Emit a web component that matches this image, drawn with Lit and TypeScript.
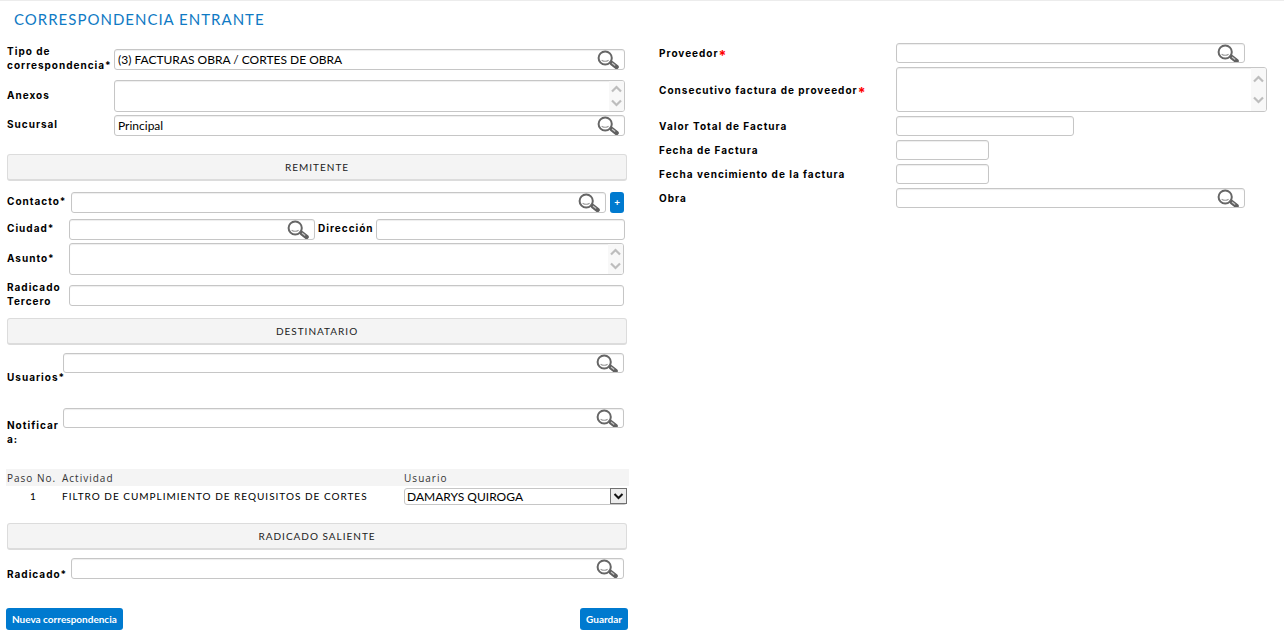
import { LitElement, html, css, nothing } from "lit";
import { customElement } from "lit/decorators.js";

const magnifier = html`<svg class="lens" viewBox="0 0 22 19" aria-hidden="true">
  <circle cx="8.2" cy="8" r="6.6" fill="#fff" stroke="#666" stroke-width="2" />
  <path d="M4.6 10.2Q8.2 12.4 11.6 10.2" fill="none" stroke="#999" stroke-width="1.1" />
  <path d="M12.6 11.6L15 13.4" stroke="#777" stroke-width="2" />
  <path d="M14.8 13.2L19.6 17" stroke="#606060" stroke-width="4.4" stroke-linecap="round" />
  <path d="M15 13L18.2 15.5" stroke="#c4c4c4" stroke-width="1.2" />
</svg>`;

const chevron = (d: string) => html`<svg width="11" height="8" viewBox="0 0 11 8" aria-hidden="true">
  <path d=${d} fill="none" stroke="#bdbdbd" stroke-width="2.2" />
</svg>`;

const label = (id: string, text: string, required = false) =>
  html`<label for=${id}>${text}${required ? html`<span class="req">*</span>` : nothing}</label>`;

const plain = (id: string, size = "") => html`<div class="box ${size}"><input id=${id} type="text" /></div>`;

const lookup = (id: string, value = "", size = "") => html`<div class="box ${size}">
  <input id=${id} type="text" .value=${value} />
  <button class="find" type="button" aria-label="Buscar">${magnifier}</button>
</div>`;

const memo = (id: string, size = "") => html`<div class="box memo ${size}">
  <textarea id=${id}></textarea>
  <div class="scroll">${chevron("M1 6.5L5.5 2L10 6.5")}${chevron("M1 1.5L5.5 6L10 1.5")}</div>
</div>`;

@customElement("app-root")
export class AppRoot extends LitElement {
  static styles = css`
    :host {
      display: block;
      font-family: "Century Gothic", Lato, sans-serif;
      font-size: 10px;
      color: #000;
      background: #fff;
    }
    *, *::before, *::after { box-sizing: border-box; }
    .page { border-top: 1px solid #ececec; padding: 8px 17px 7px 7px; }
    h1 {
      margin: 0 7px 14px;
      font-size: 15px;
      line-height: 20px;
      font-weight: 400;
      letter-spacing: 1px;
      color: #0f7ac4;
    }
    .columns {
      display: grid;
      grid-template-columns: minmax(0, 51fr) minmax(0, 50fr);
      column-gap: 32px;
      align-items: start;
    }
    .main { padding-top: 1px; }
    .row {
      display: grid;
      grid-template-columns: 62px minmax(0, 1fr);
      align-items: center;
      padding-right: 3px;
    }
    .row.wide { grid-template-columns: 107px minmax(0, 1fr); padding-right: 2px; }
    .row.contact { grid-template-columns: 64px minmax(0, 1fr) 14px; }
    .row.contact .box { margin-right: 4px; }
    .row.city { grid-template-columns: 62px minmax(0, 246fr) 61px minmax(0, 249fr); padding-right: 2px; }
    .row.city .second { padding-left: 3px; }
    .row.people { grid-template-columns: 56px minmax(0, 1fr); min-height: 48px; }
    .row.people .box { align-self: start; height: 20px; }
    .row.filed { grid-template-columns: 64px minmax(0, 1fr); min-height: 32px; }
    .row.filed .box { align-self: start; }
    label {
      font-family: "Century Gothic", Inter, sans-serif;
      font-weight: 700;
      line-height: 14px;
      letter-spacing: 1px;
      padding-bottom: 3px;
    }
    .people label, .filed label, .side label { padding-bottom: 0; }
    .req { color: #f00; font-size: 14px; line-height: 0; vertical-align: -4px; letter-spacing: 0; }
    .box {
      display: flex;
      height: 21px;
      border: 1px solid #c6c6c6;
      border-radius: 3px;
      background: #fff;
      box-shadow: inset 0 1px 1px #eee;
      overflow: hidden;
    }
    input, textarea {
      flex: 1;
      min-width: 0;
      width: 100%;
      border: 0;
      outline: 0;
      padding: 0 3px;
      background: transparent;
      font: 12px "Century Gothic", Lato, sans-serif;
      color: #000;
    }
    textarea { resize: none; overflow: hidden; }
    .memo { height: 32px; }
    .scroll {
      display: flex;
      flex-direction: column;
      justify-content: space-between;
      align-items: center;
      width: 15px;
      padding: 4px 0;
      background: #f8f8f8;
    }
    .tall .scroll { padding: 7px 0; }
    .find {
      display: flex;
      border: 0;
      margin: 0 5px 0 0;
      padding: 0;
      background: none;
    }
    .lens { width: 22px; height: 19px; }
    h2 {
      margin: 0;
      height: 27px;
      border: 1px solid #dcdcdc;
      border-bottom-width: 2px;
      border-radius: 3px;
      background: #f4f4f4;
      font-size: 10px;
      line-height: 25px;
      font-weight: 400;
      letter-spacing: 1px;
      text-align: center;
      color: #222;
    }
    .blue {
      border: 0;
      border-radius: 3px;
      background: #007acf;
      color: #fff;
      font: 700 10px "Century Gothic", Lato, sans-serif;
      height: 22px;
      padding: 0 6px;
    }
    .plus { height: 21px; padding: 0 0 2px; }
    table {
      width: calc(100% + 3px);
      margin: 13px -2px 0 -1px;
      border-collapse: collapse;
      table-layout: fixed;
      letter-spacing: 1px;
    }
    th {
      height: 17px;
      padding: 0 1px;
      background: #f4f4f4;
      font: 500 10px/16px "Open Sans", sans-serif;
      text-align: left;
      white-space: nowrap;
      color: #333;
    }
    td { height: 19px; padding: 0 1px; white-space: nowrap; }
    .step { width: 55px; }
    .who { width: 226px; }
    td.step { text-align: center; }
    .pick { position: relative; width: 223px; height: 17px; margin-top: 1px; }
    select {
      appearance: none;
      display: block;
      width: 100%;
      height: 17px;
      border: 1px solid #c6c6c6;
      border-radius: 3px;
      padding: 0 18px 0 2px;
      background: #fff;
      font: 12px/15px "Century Gothic", Lato, sans-serif;
      color: #000;
    }
    .arrow {
      position: absolute;
      top: 0;
      right: 0;
      width: 17px;
      height: 16px;
      border: 1px solid #707070;
      background: #ececec;
      pointer-events: none;
    }
    .arrow svg { display: block; width: 15px; height: 14px; }
    .actions { display: flex; justify-content: space-between; margin: 18px -1px 0; }
    .side { display: grid; grid-template-columns: 237px minmax(0, 1fr); row-gap: 4px; align-items: center; }
    .side .box { height: 20px; }
    .side .memo.tall { height: 45px; }
    .mid { width: 94%; }
    .amount { width: 48%; }
    .date { width: 25%; }
    .g3 { margin-top: 3px; }
    .g5 { margin-top: 5px; }
    .g6 { margin-top: 6px; }
    .g7 { margin-top: 7px; }
    .g8 { margin-top: 8px; }
    .g11 { margin-top: 11px; }
    .g18 { margin-top: 18px; }
  `;

  render() {
    return html`<form class="page" @submit=${(e: Event) => e.preventDefault()}>
      <h1>CORRESPONDENCIA ENTRANTE</h1>
      <div class="columns">
        <div class="main">
          <div class="row wide">${label("tipo", "Tipo de correspondencia*")}${lookup("tipo", "(3) FACTURAS OBRA / CORTES DE OBRA")}</div>
          <div class="row wide g5">${label("anexos", "Anexos")}${memo("anexos")}</div>
          <div class="row wide g3">${label("sucursal", "Sucursal")}${lookup("sucursal", "Principal")}</div>

          <h2 class="g18">REMITENTE</h2>
          <div class="row contact g11">
            ${label("contacto", "Contacto*")}${lookup("contacto")}
            <button class="blue plus" type="button">+</button>
          </div>
          <div class="row city g6">
            ${label("ciudad", "Ciudad*")}${lookup("ciudad")}
            <label class="second" for="direccion">Dirección</label>${plain("direccion")}
          </div>
          <div class="row g3">${label("asunto", "Asunto*")}${memo("asunto")}</div>
          <div class="row g5">${label("tercero", "Radicado Tercero")}${plain("tercero")}</div>

          <h2 class="g7">DESTINATARIO</h2>
          <div class="row people g8">${label("usuarios", "Usuarios*")}${lookup("usuarios")}</div>
          <div class="row people g7">${label("notificar", "Notificar a:")}${lookup("notificar")}</div>

          <table>
            <thead>
              <tr><th class="step">Paso No.</th><th>Actividad</th><th class="who">Usuario</th></tr>
            </thead>
            <tbody>
              <tr>
                <td class="step">1</td>
                <td>FILTRO DE CUMPLIMIENTO DE REQUISITOS DE CORTES</td>
                <td class="who">
                  <div class="pick">
                    <select aria-label="Usuario"><option>DAMARYS QUIROGA</option></select>
                    <span class="arrow"><svg viewBox="0 0 15 14" aria-hidden="true">
                      <path d="M3.5 5L7.5 9L11.5 5" fill="none" stroke="#111" stroke-width="2" />
                    </svg></span>
                  </div>
                </td>
              </tr>
            </tbody>
          </table>

          <h2 class="g18">RADICADO SALIENTE</h2>
          <div class="row filed g8">${label("radicado", "Radicado*")}${lookup("radicado")}</div>
          <div class="actions">
            <button class="blue" type="button">Nueva correspondencia</button>
            <button class="blue" type="submit">Guardar</button>
          </div>
        </div>

        <div class="side">
          ${label("proveedor", "Proveedor", true)}${lookup("proveedor", "", "mid")}
          ${label("consecutivo", "Consecutivo factura de proveedor", true)}${memo("consecutivo", "tall")}
          ${label("valor", "Valor Total de Factura")}${plain("valor", "amount")}
          ${label("fecha", "Fecha de Factura")}${plain("fecha", "date")}
          ${label("vencimiento", "Fecha vencimiento de la factura")}${plain("vencimiento", "date")}
          ${label("obra", "Obra")}${lookup("obra", "", "mid")}
        </div>
      </div>
    </form>`;
  }
}
